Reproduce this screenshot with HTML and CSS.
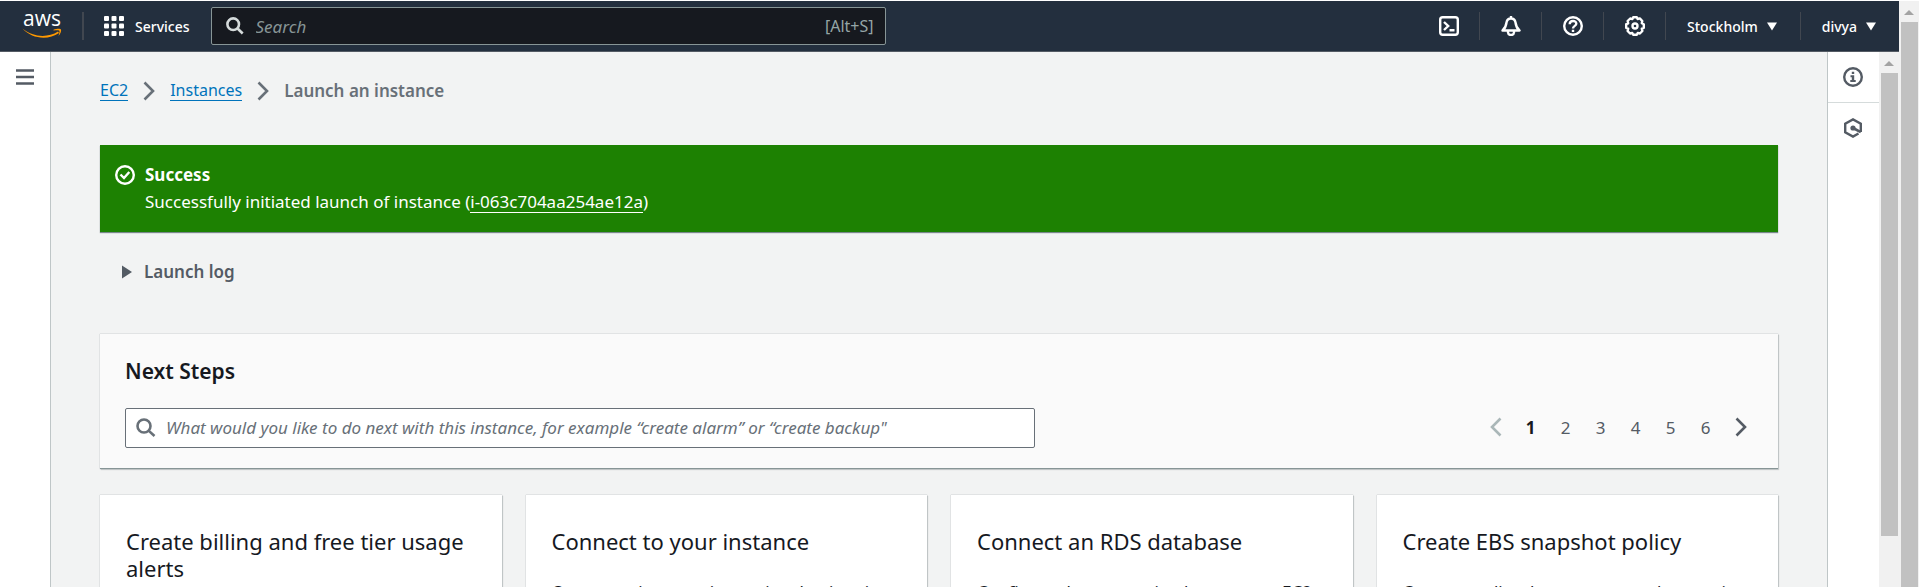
FILE: index.html
```html
<!DOCTYPE html>
<html lang="en">
<head>
<meta charset="utf-8">
<title>Launch an instance | EC2</title>
<link rel="stylesheet" href="styles.css">
</head>
<body>
<div class="window">
  <div class="console">
    <header class="topbar">
      <a class="logo" href="#" aria-label="AWS home">
        <svg width="42" height="28" viewBox="0 0 42 28">
          <text class="logo-text" x="21" y="14" text-anchor="middle">aws</text>
          <path d="M1.500 16.500C12 25.500 27 26 37 19.500L38 21C27 28.500 11 27 1.500 16.500Z" fill="#ff9900"/>
          <path d="M32.500 17.800C36 16.500 39.500 16.500 40 17.500C40.500 19 39.500 22 37.500 24C38 22 39 19.500 38.300 18.800C37.300 18 35 18.300 32.500 18.600Z" fill="#ff9900"/>
        </svg>
      </a>
      <span class="divider"></span>
      <button class="services" type="button">
        <svg width="20" height="20" viewBox="0 0 20 20" fill="#fff">
          <rect width="5" height="5" rx="1"/><rect x="7.500" width="5" height="5" rx="1"/><rect x="15" width="5" height="5" rx="1"/>
          <rect y="7.500" width="5" height="5" rx="1"/><rect x="7.500" y="7.500" width="5" height="5" rx="1"/><rect x="15" y="7.500" width="5" height="5" rx="1"/>
          <rect y="15" width="5" height="5" rx="1"/><rect x="7.500" y="15" width="5" height="5" rx="1"/><rect x="15" y="15" width="5" height="5" rx="1"/>
        </svg>
        Services
      </button>
      <label class="search">
        <svg width="18" height="18" viewBox="0 0 18 18" fill="none" stroke="#d5dbdb" stroke-width="2.600"><circle cx="7.200" cy="7.200" r="5.800"/><path d="M11.300 11.300L16.700 16.500"/></svg>
        <input class="search-input" type="text" placeholder="Search" aria-label="Search">
        <span class="shortcut">[Alt+S]</span>
      </label>
      <nav class="tools" aria-label="Account">
        <button class="tool" type="button" aria-label="CloudShell">
          <svg width="20" height="20" viewBox="0 0 20 20" fill="none" stroke="#fff" stroke-width="2.400"><rect x="1.200" y="1.200" width="17.600" height="17.600" rx="2.500"/><path d="M5 6L9.200 10L5 14M10.500 14.300H15.500"/></svg>
        </button>
        <button class="tool" type="button" aria-label="Notifications">
          <svg width="20" height="20" viewBox="0 0 20 20" fill="none" stroke="#fff" stroke-width="2.400" stroke-linejoin="round"><path d="M10 0V2.500M1.500 14.500C4 12.500 5 11 5.500 6.500C6 3.500 7.500 2.500 10 2.500S14 3.500 14.500 6.500C15 11 16 12.500 18.500 14.500ZM7 15V16.500C7.300 19.800 12.700 19.800 13 16.500V15"/></svg>
        </button>
        <button class="tool" type="button" aria-label="Help">
          <svg width="20" height="20" viewBox="0 0 20 20" fill="none" stroke="#fff" stroke-width="2.400"><circle cx="10" cy="10" r="8.800"/><path d="M6.700 8.200C6.700 3.900 13.300 4 13.300 7.800C13.300 10 10 9.800 10 12.500M10 13.700V16"/></svg>
        </button>
        <button class="tool" type="button" aria-label="Settings">
          <svg width="20" height="20" viewBox="0 0 20 20" fill="none" stroke="#fff" stroke-width="2.400" stroke-linejoin="round"><path d="M8.200 1.200H11.800L12.600 3L14.800 2.400L17.300 5L16.800 7.200L18.800 8.200V11.800L16.800 12.700L17.400 15L14.900 17.500L12.700 16.900L11.800 18.800H8.200L7.300 16.900L5.100 17.500L2.600 15L3.200 12.700L1.200 11.800V8.200L3.200 7.300L2.600 5L5.200 2.500L7.400 3.100Z"/><circle cx="10" cy="10" r="2.500"/></svg>
        </button>
        <button class="tool tool-menu" type="button">Stockholm <svg width="10" height="9" viewBox="0 0 10 9"><path d="M0 .500H10L5 8.500Z" fill="#fff"/></svg></button>
        <button class="tool tool-menu" type="button">divya <svg width="10" height="9" viewBox="0 0 10 9"><path d="M0 .500H10L5 8.500Z" fill="#fff"/></svg></button>
      </nav>
    </header>

    <div class="workspace">
      <aside class="rail rail-left">
        <button class="rail-button" type="button" aria-label="Open navigation">
          <svg width="18" height="16" viewBox="0 0 18 16" stroke="#545b64" stroke-width="2.400"><path d="M0 1.500H18M0 8H18M0 14.500H18"/></svg>
        </button>
      </aside>

      <main class="content">
        <nav class="crumbs" aria-label="Breadcrumb">
          <a class="link" href="#">EC2</a>
          <svg width="12" height="20" viewBox="0 0 12 20" fill="none" stroke="#687078" stroke-width="2.600"><path d="M1.500 1.500L10 10L1.500 18.500"/></svg>
          <a class="link" href="#">Instances</a>
          <svg width="12" height="20" viewBox="0 0 12 20" fill="none" stroke="#687078" stroke-width="2.600"><path d="M1.500 1.500L10 10L1.500 18.500"/></svg>
          <span class="crumb-current">Launch an instance</span>
        </nav>

        <section class="flash">
          <svg class="flash-icon" width="20" height="20" viewBox="0 0 20 20" fill="none" stroke="#fff" stroke-width="2.400"><circle cx="10" cy="10" r="8.800"/><path d="M5.500 9.500L9 13L14.300 7"/></svg>
          <div class="flash-text">
            <strong class="flash-title">Success</strong>
            <p class="flash-message">Successfully initiated launch of instance (<a class="flash-link" href="#">i-063c704aa254ae12a</a>)</p>
          </div>
        </section>

        <button class="expander" type="button">
          <svg width="10" height="14" viewBox="0 0 10 14"><path d="M0 .500L10 7L0 13.500Z" fill="#545b64"/></svg>
          Launch log
        </button>

        <section class="panel">
          <h2 class="panel-title">Next Steps</h2>
          <div class="panel-row">
            <label class="filter">
              <svg width="20" height="20" viewBox="0 0 20 20" fill="none" stroke="#687078" stroke-width="2.600"><circle cx="8" cy="8" r="6.500"/><path d="M12.600 12.600L18.500 18"/></svg>
              <input class="filter-input" type="text" placeholder="What would you like to do next with this instance, for example “create alarm” or “create backup&quot;" aria-label="Find next steps">
            </label>
            <nav class="pages" aria-label="Pagination">
              <button class="page" type="button" aria-label="Previous page" disabled><svg width="12" height="20" viewBox="0 0 12 20" fill="none" stroke="#aab7b8" stroke-width="2.600"><path d="M10.500 1.500L2 10L10.500 18.500"/></svg></button>
              <button class="page page-current" type="button">1</button>
              <button class="page" type="button">2</button>
              <button class="page" type="button">3</button>
              <button class="page" type="button">4</button>
              <button class="page" type="button">5</button>
              <button class="page" type="button">6</button>
              <button class="page" type="button" aria-label="Next page"><svg width="12" height="20" viewBox="0 0 12 20" fill="none" stroke="#545b64" stroke-width="2.600"><path d="M1.500 1.500L10 10L1.500 18.500"/></svg></button>
            </nav>
          </div>
        </section>

        <div class="cards">
          <article class="card"><h3 class="card-title">Create billing and free tier usage alerts</h3></article>
          <article class="card"><h3 class="card-title">Connect to your instance</h3><p class="card-text">Once your instance is running, log into it</p></article>
          <article class="card"><h3 class="card-title">Connect an RDS database</h3><p class="card-text">Configure the connection between an EC2</p></article>
          <article class="card"><h3 class="card-title">Create EBS snapshot policy</h3><p class="card-text">Create a policy that automates the creation</p></article>
        </div>
      </main>

      <aside class="rail rail-right">
        <button class="rail-button" type="button" aria-label="Info">
          <svg width="20" height="20" viewBox="0 0 20 20" fill="none" stroke="#545b64" stroke-width="2.400"><circle cx="10" cy="10" r="8.800"/><path d="M8.800 4.800H11.200V7H8.800ZM7.500 8.300H11.200V13H12.700V15H7.300V13H8.800V10.200H7.500Z" fill="#545b64" stroke="none"/></svg>
        </button>
        <button class="rail-button" type="button" aria-label="Tutorials">
          <svg width="20" height="20" viewBox="0 0 20 20" fill="none" stroke="#545b64" stroke-width="2.400"><path d="M15.500 15.500L10 18.600L2.200 14.400V5.600L10 1.400L17.800 5.600V14"/><circle cx="10" cy="10" r="2.600" fill="#545b64" stroke="none"/><path d="M10 10L17.800 14.200" stroke-width="2.600"/></svg>
        </button>
      </aside>

      <div class="scrollbar scrollbar-inner"><span class="scroll-arrow"></span><span class="scroll-thumb"></span></div>
    </div>
  </div>
  <div class="scrollbar"><span class="scroll-arrow"></span><span class="scroll-thumb"></span></div>
</div>
</body>
</html>
```
FILE: styles.css
```css
* { box-sizing: border-box; }
body {
  margin: 0;
  font: 17px/27px "Noto Sans", "Open Sans", sans-serif;
  color: #16191f;
  background: #fff;
}
button, input { font: inherit; color: inherit; }
button { display: flex; align-items: center; padding: 0; border: 0; background: none; cursor: pointer; }
input { min-width: 0; padding: 0; border: 0; outline: 0; background: none; }
h2, h3, p { margin: 0; }
svg { flex: none; display: block; }

.window { display: flex; height: 100vh; padding-top: 1px; overflow: hidden; }
.console { flex: 1; min-width: 0; display: flex; flex-direction: column; }

.topbar {
  flex: none;
  display: flex;
  align-items: center;
  height: 51px;
  padding-left: 21px;
  background: #232f3e;
  border-bottom: 1px solid #545b64;
  color: #fff;
}
.logo svg { overflow: visible; }
.logo-text { font: 500 21px "Open Sans", sans-serif; fill: #fff; }
.divider { width: 2px; height: 28px; margin: 0 20px 0 19px; background: #414750; }
.services { gap: 11px; font-size: 14px; font-weight: 500; }
.search {
  display: flex;
  align-items: center;
  flex: 0 1 675px;
  height: 38px;
  margin-left: 21px;
  padding: 0 11px 0 14px;
  background: #16191f;
  border: 1px solid #879596;
  border-radius: 2px;
}
.search-input { flex: 1; margin-left: 12px; }
.search-input::placeholder { color: #879596; font-style: italic; opacity: 1; }
.shortcut { font-size: 16px; color: #95a5a6; }
.tools { display: flex; align-items: center; margin-left: auto; }
.tool { justify-content: center; width: 62px; height: 28px; border-right: 1px solid #414750; }
.tool-menu { gap: 9px; width: auto; padding: 0 23px 0 21px; font-size: 14px; font-weight: 500; }
.tool-menu:last-child { border-right: 0; }

.workspace { flex: 1; min-height: 0; display: flex; }
.rail { flex: none; width: 51px; background: #fff; }
.rail-left { border-right: 1px solid #bfc6c7; }
.rail-right { width: 52px; border-left: 1px solid #bfc6c7; }
.rail-button { justify-content: center; width: 100%; height: 50px; }
.rail-right .rail-button { width: 50px; }
.rail-right .rail-button:first-child { width: 100%; height: 51px; padding-right: 1px; border-bottom: 1px solid #d5dbdb; }

.content { flex: 1; min-width: 0; padding: 25px 49px 0; background: #f2f3f3; overflow: hidden; }
.crumbs { display: flex; align-items: center; gap: 15px; }
.link { font-size: 16px; line-height: 20px; color: #0073bb; text-decoration: none; border-bottom: 1px solid #0073bb; }
.crumb-current { font-weight: 600; color: #687078; }

.flash {
  display: flex;
  gap: 10px;
  margin-top: 41px;
  padding: 16px 15px;
  background: #1d8102;
  color: #fff;
  box-shadow: 0 1px 1px #001c2480;
}
.flash-icon { margin-top: 4px; }
.flash-text { padding-bottom: 1px; }
.flash-title { display: block; font-weight: 700; }
.flash-link { display: inline-block; line-height: 20px; color: inherit; text-decoration: none; border-bottom: 1px solid #fff; }

.expander { gap: 12px; margin: 26px 0 0 22px; font-weight: 600; color: #545b64; }

.panel, .card { box-shadow: 0 0 1px #001c2466, 1px 1px 1px #001c2426; }
.panel { margin-top: 49px; padding: 24px 25px 20px; background: #fafafa; border-bottom: 1px solid #879596; }
.panel-title { font-size: 21px; line-height: 27px; font-weight: 600; }
.panel-row { display: flex; align-items: center; justify-content: space-between; margin-top: 23px; }
.filter {
  display: flex;
  align-items: center;
  flex: 0 1 910px;
  height: 40px;
  padding: 0 10px;
  background: #fff;
  border: 1px solid #687078;
  border-radius: 2px;
}
.filter-input { flex: 1; margin-left: 10px; padding-bottom: 2px; }
.filter-input::placeholder { color: #687078; font-style: italic; opacity: 1; }
.pages { display: flex; }
.page { justify-content: center; width: 35px; padding-bottom: 2px; color: #545b64; }
.page:last-child { margin-right: -5px; }
.page-current { font-weight: 700; color: #16191f; }

.cards { display: grid; grid-template-columns: repeat(4, 1fr); gap: 24px; margin-top: 26px; }
.card { min-height: 220px; padding: 33px 26px; background: #fff; }
.card-title { font-size: 22px; line-height: 27px; font-weight: 400; }
.card-text { margin-top: 23px; }

.scrollbar { flex: none; display: flex; flex-direction: column; align-items: center; width: 20px; background: #f1f1f1; }
.scroll-arrow { margin: 9px 0 7px; border: 5px solid transparent; border-top: 0; border-bottom-color: #a3a3a3; }
.scroll-thumb { flex: 1; width: 17px; background: #c1c1c1; }
.scrollbar-inner .scroll-thumb { flex: 0 1 463px; }
```
